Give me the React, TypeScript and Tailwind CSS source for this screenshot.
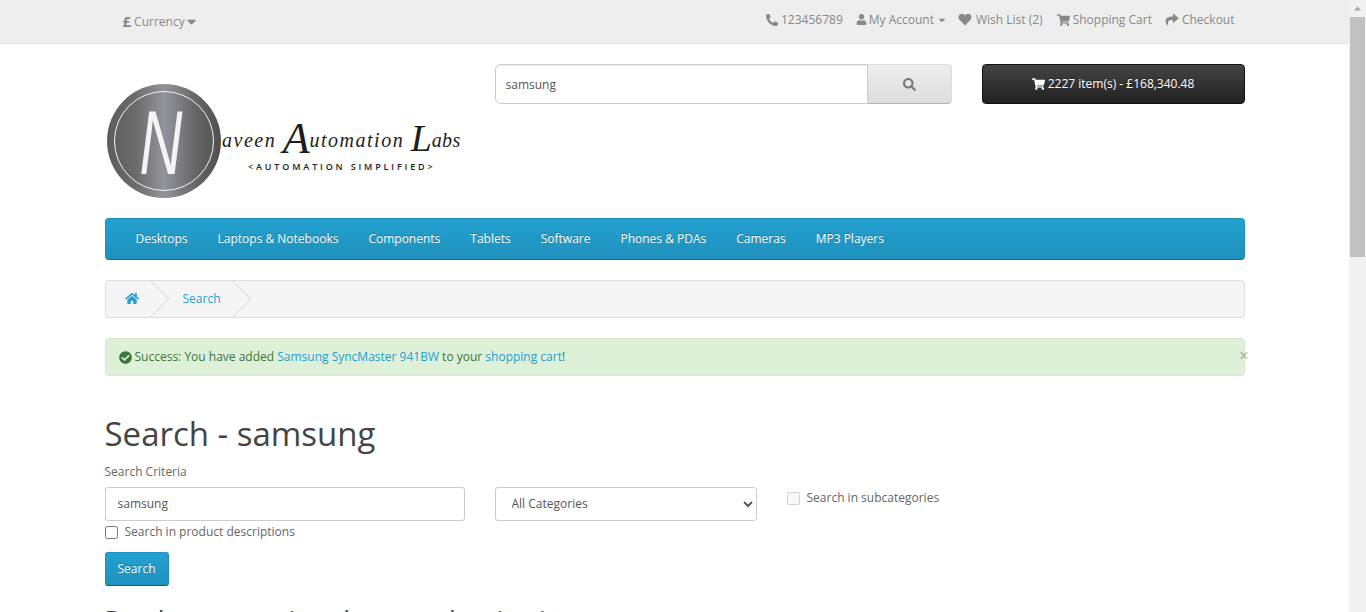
import React from "react";
import {
  FaCaretDown,
  FaCheckCircle,
  FaHeart,
  FaHome,
  FaPhone,
  FaSearch,
  FaShare,
  FaShoppingCart,
  FaTimes,
  FaUser,
} from "react-icons/fa";

const menu = ["Desktops", "Laptops & Notebooks", "Components", "Tablets", "Software", "Phones & PDAs", "Cameras", "MP3 Players"];

function Logo() {
  return (
    <svg width="358" height="118" viewBox="0 0 358 118" className="block">
      <defs>
        <linearGradient id="metal" x1="0" x2="1" y1="0" y2="0">
          <stop offset="0" stopColor="#5c5c5c" />
          <stop offset="0.25" stopColor="#6b6b6b" />
          <stop offset="0.5" stopColor="#93949a" />
          <stop offset="0.78" stopColor="#666666" />
          <stop offset="1" stopColor="#4f4f4f" />
        </linearGradient>
      </defs>
      <circle cx="59" cy="59" r="57" fill="url(#metal)" />
      <circle cx="59" cy="59" r="49.5" fill="none" stroke="#f2f2f2" strokeWidth="1" />
      <text x="0" y="0" textAnchor="middle" fontFamily="'Liberation Sans', sans-serif" fontSize="90" fill="#f4f4f4" fontStyle="italic" transform="translate(56 92) scale(0.66 1)">N</text>
      <text x="117" y="65" fontFamily="'Liberation Serif', serif" fontStyle="italic" fill="#1d1d1d" letterSpacing="1.5" fontSize="20">
        aveen <tspan fontSize="44" dy="6" letterSpacing="0">A</tspan><tspan dy="-6" letterSpacing="1.5">utomation</tspan> <tspan fontSize="38" dy="4" letterSpacing="0">L</tspan><tspan dy="-4" letterSpacing="0.3">abs</tspan>
      </text>
      <text x="143" y="88" fontFamily="'Open Sans', sans-serif" fontWeight="600" fontSize="9" letterSpacing="2.85" fill="#222222">&lt;AUTOMATION SIMPLIFIED&gt;</text>
    </svg>
  );
}

export default function App() {
  return (
    <div className="flex h-[612px] overflow-hidden bg-white font-['Open_Sans',sans-serif] text-xs text-[#666666]">
      <div className="min-w-0 flex-1">
        <nav className="h-11 border-b border-[#e2e2e2] bg-[#eeeeee] text-[#888888]">
          <div className="mx-auto flex h-[43px] w-[1140px] items-start justify-between">
            <div className="flex items-center pl-[18px] pt-[13px] text-[12px]">
              <span className="mr-[3px] text-[15px] font-bold leading-[17px] text-[#888888]">£</span>
              <span>Currency</span>
              <FaCaretDown className="ml-px h-[15px] w-[11px]" />
            </div>
            <div className="flex items-center gap-[13px] pr-[10px] pt-[11px] leading-[17px]">
              <span className="flex items-center gap-[3px]"><FaPhone className="h-[12px] w-[12px] -scale-x-100" />123456789</span>
              <span className="flex items-center gap-[2px]"><FaUser className="h-[11px] w-[11px]" />My Account<FaCaretDown className="ml-[1px] h-[10px] w-[8px] translate-x-px" /></span>
              <span className="mr-px flex items-center gap-[4px]"><FaHeart className="h-[13px] w-[14px]" />Wish List (2)</span>
              <span className="flex items-center gap-[3px]"><FaShoppingCart className="h-[12px] w-[13px]" />Shopping Cart</span>
              <span className="flex items-center gap-[3px]"><FaShare className="h-[13px] w-[14px]" />Checkout</span>
            </div>
          </div>
        </nav>

        <main className="mx-auto w-[1140px]">
          <header className="flex h-[174px] items-start">
            <div className="w-[390px] pt-[38px]"><Logo /></div>
            <div className="flex w-[457px] pt-5">
              <input
                readOnly
                value="samsung"
                className="h-10 w-[373px] rounded-l-[6px] border border-[#cccccc] bg-white px-[10px] text-[12px] text-[#555555] shadow-[inset_0_1px_1px_rgba(0,0,0,0.075)] outline-none"
              />
              <button className="flex h-10 w-[84px] items-center justify-center rounded-r-[4px] border border-l-0 border-[#dddddd] border-b-[#b3b3b3] bg-gradient-to-b from-[#eeeeee] to-[#dddddd] text-[#777777]">
                <FaSearch className="h-[13px] w-[13px]" />
              </button>
            </div>
            <div className="ml-[30px] pt-5">
              <button className="flex h-10 w-[263px] items-center justify-center gap-[3px] rounded-[4px] border border-[#111111] bg-gradient-to-b from-[#444444] to-[#222222] text-[12px] text-white [text-shadow:0_-1px_0_rgba(0,0,0,0.25)]">
                <FaShoppingCart className="h-[12px] w-[13px]" />
                2227 item(s) - £168,340.48
              </button>
            </div>
          </header>

          <div className="flex h-[42px] items-center gap-[30px] rounded-[4px] border border-[#1f90bb] border-b-[#1a6f93] bg-gradient-to-b from-[#23a1d1] to-[#1f90bb] px-[30px] text-[12px] text-white [text-shadow:0_-1px_0_rgba(0,0,0,0.25)]">
            {menu.map((m) => (
              <span key={m}>{m}</span>
            ))}
          </div>

          <div className="mt-5 flex h-[38px] items-center overflow-hidden rounded-[4px] border border-[#dddddd] bg-[#f5f5f5] text-[#23a1d1]">
            <div className="relative flex h-full w-[53px] items-center justify-center pb-[2px]">
              <FaHome className="h-[13px] w-[14px]" />
              <span className="absolute right-[-5px] top-[5px] h-[26px] w-[26px] -rotate-45 border-b border-r border-[#dddddd]" />
            </div>
            <div className="relative ml-[4px] flex h-full w-[78px] items-center justify-center">
              Search
              <span className="absolute right-[-5px] top-[5px] h-[26px] w-[26px] -rotate-45 border-b border-r border-[#dddddd]" />
            </div>
          </div>

          <div className="relative mt-5 flex h-[38px] items-center rounded-[4px] border border-[#d6e9c6] bg-[#dff0d8] pl-[13px] text-[#3c763d]">
            <FaCheckCircle className="mr-[3px] h-[13px] w-[13px]" />
            <span>
              Success: You have added <span className="text-[#23a1d1]">Samsung SyncMaster 941BW</span> to your <span className="text-[#23a1d1]">shopping cart</span>!
            </span>
            <FaTimes className="absolute right-[-5px] top-[11px] h-[11px] w-[10px] text-[#000000] opacity-20" />
          </div>

          <h1 className="mt-[36px] text-[33px] font-normal leading-[44px] text-[#444444]">Search - samsung</h1>

          <div className="mt-[6px] leading-[20px]">Search Criteria</div>
          <div className="mt-[5px] flex items-start">
            <div className="w-[390px]">
              <input
                readOnly
                value="samsung"
                className="block h-[34px] w-[360px] rounded-[3px] border border-[#cccccc] bg-white px-3 pb-px text-[12px] text-[#555555] outline-none"
              />
              <label className="mt-[1px] flex h-[20px] items-center gap-[7px]">
                <input type="checkbox" className="m-0 h-[13px] w-[13px]" />
                Search in product descriptions
              </label>
            </div>
            <div className="w-[292px]">
              <select className="block h-[34px] w-[262px] rounded-[3px] border border-[#cccccc] bg-white px-3 pb-[2px] text-[12px] text-[#555555] outline-none">
                <option>All Categories</option>
              </select>
            </div>
            <label className="mt-px flex h-[20px] items-center gap-[7px]">
              <input type="checkbox" disabled className="m-0 h-[13px] w-[13px]" />
              Search in subcategories
            </label>
          </div>

          <button className="mt-[10px] flex h-[34px] w-[64px] items-center justify-center rounded-[3px] border border-[#1f90bb] border-b-[#145e7a] bg-gradient-to-b from-[#23a1d1] to-[#1f90bb] text-[12px] text-white [text-shadow:0_-1px_0_rgba(0,0,0,0.25)]">
            Search
          </button>

          <h2 className="mt-[17px] text-[27px] font-normal leading-[36px] text-[#444444]">Products meeting the search criteria</h2>
        </main>
      </div>

      <div className="flex w-[17px] shrink-0 flex-col items-center bg-[#f1f1f1]">
        <svg width="17" height="17" viewBox="0 0 17 17" className="shrink-0">
          <path d="M5 10.5 L8.5 6.5 L12 10.5 Z" fill="#a3a3a3" />
        </svg>
        <div className="h-[240px] w-[15px] shrink-0 bg-[#c1c1c1]" />
      </div>
    </div>
  );
}
